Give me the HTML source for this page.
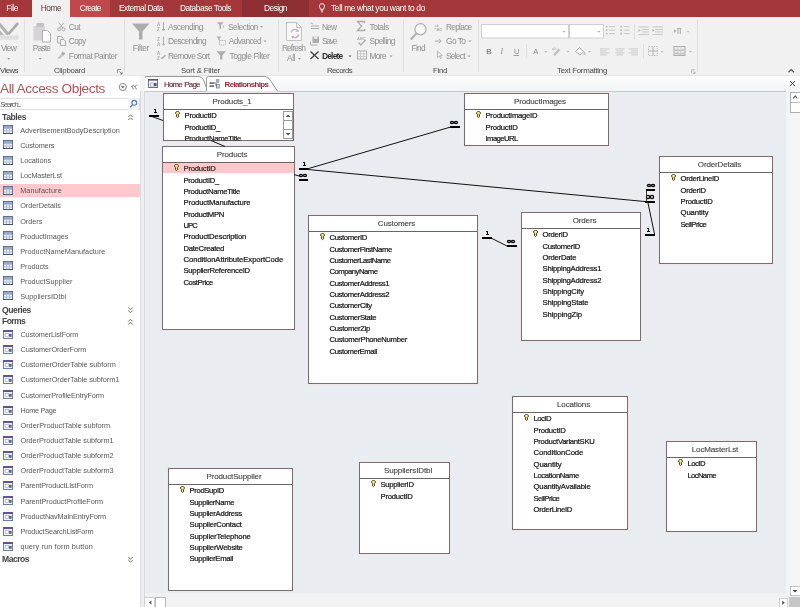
<!DOCTYPE html>
<html><head><meta charset="utf-8"><title>Access</title>
<style>
html,body{margin:0;padding:0;}
body{width:800px;height:607px;overflow:hidden;position:relative;background:#e9ecf0;font-family:"Liberation Sans", sans-serif;font-size:8px;color:#444;}
#w{position:absolute;left:0;top:0;width:800px;height:607px;will-change:transform;}
.a{position:absolute;white-space:nowrap;line-height:1;}
.tb{position:absolute;background:#fff;border:1px solid #786d71;box-sizing:border-box;box-shadow:0 0 0 1px rgba(246,228,232,.75);}
.hl{position:absolute;left:0;right:0;height:1px;background:#6e6266;}
.sep{position:absolute;width:1px;background:#dedede;top:20px;height:52px;}
svg{position:absolute;left:0;top:0;overflow:visible;}
</style></head><body><div id="w">

<div class="a" style="left:0;top:0;width:800px;height:17px;background:#a4373a"></div>
<div class="a" style="left:32px;top:0;width:38px;height:18px;background:#f1f1f1"></div>
<div class="a" style="left:70px;top:0;width:40px;height:17px;background:#c0474c"></div>
<div class="a" style="left:242px;top:0;width:67px;height:17px;background:#8c2e32"></div>
<div class="a" style="left:6.3px;top:2px;line-height:12px;height:12px;font-size:8.4px;color:#fff;letter-spacing:-0.450px;">File</div>
<div class="a" style="left:40.8px;top:2px;line-height:12px;height:12px;font-size:8.4px;color:#5c3a3c;letter-spacing:-0.486px;">Home</div>
<div class="a" style="left:79.8px;top:2px;line-height:12px;height:12px;font-size:8.4px;color:#fff;letter-spacing:-0.690px;">Create</div>
<div class="a" style="left:119.0px;top:2px;line-height:12px;height:12px;font-size:8.4px;color:#fff;letter-spacing:-0.519px;">External Data</div>
<div class="a" style="left:180.0px;top:2px;line-height:12px;height:12px;font-size:8.4px;color:#fff;letter-spacing:-0.470px;">Database Tools</div>
<div class="a" style="left:264.0px;top:2px;line-height:12px;height:12px;font-size:8.4px;color:#fff;letter-spacing:-0.513px;">Design</div>
<div class="a" style="left:331.0px;top:2px;line-height:12px;height:12px;font-size:8.4px;color:#fff;letter-spacing:-0.347px;">Tell me what you want to do</div>
<div class="a" style="left:0;top:17px;width:800px;height:58px;background:#f1f1f1"></div>
<div class="a" style="left:0;top:75px;width:800px;height:1px;background:#e6e6e6"></div>
<div class="sep" style="left:24px"></div>
<div class="sep" style="left:124px"></div>
<div class="sep" style="left:278px"></div>
<div class="sep" style="left:403px"></div>
<div class="sep" style="left:478px"></div>
<div class="sep" style="left:697px"></div>
<div class="a" style="left:0.0px;top:65px;line-height:11px;height:11px;font-size:7.8px;color:#484848;letter-spacing:-0.534px;">Views</div>
<div class="a" style="left:54.0px;top:65px;line-height:11px;height:11px;font-size:7.8px;color:#484848;letter-spacing:-0.264px;">Clipboard</div>
<div class="a" style="left:181.0px;top:65px;line-height:11px;height:11px;font-size:7.8px;color:#484848;letter-spacing:-0.167px;">Sort &amp; Filter</div>
<div class="a" style="left:327.0px;top:65px;line-height:11px;height:11px;font-size:7.8px;color:#484848;letter-spacing:-0.578px;">Records</div>
<div class="a" style="left:433.0px;top:65px;line-height:11px;height:11px;font-size:7.8px;color:#484848;letter-spacing:-0.293px;">Find</div>
<div class="a" style="left:557.0px;top:65px;line-height:11px;height:11px;font-size:7.8px;color:#484848;letter-spacing:-0.249px;">Text Formatting</div>
<div class="a" style="left:1.0px;top:42px;line-height:12px;height:12px;font-size:8.4px;color:#8e8e8e;letter-spacing:-0.754px;">View</div>
<div class="a" style="left:32.8px;top:42px;line-height:12px;height:12px;font-size:8.4px;color:#8e8e8e;letter-spacing:-0.844px;">Paste</div>
<div class="a" style="left:68.8px;top:21px;line-height:12px;height:12px;font-size:8.4px;color:#8e8e8e;letter-spacing:-0.616px;">Cut</div>
<div class="a" style="left:68.8px;top:35px;line-height:12px;height:12px;font-size:8.4px;color:#8e8e8e;letter-spacing:-0.691px;">Copy</div>
<div class="a" style="left:68.8px;top:50px;line-height:12px;height:12px;font-size:8.4px;color:#8e8e8e;letter-spacing:-0.514px;">Format Painter</div>
<div class="a" style="left:132.8px;top:42px;line-height:12px;height:12px;font-size:8.4px;color:#8e8e8e;letter-spacing:-0.438px;">Filter</div>
<div class="a" style="left:168.0px;top:21px;line-height:12px;height:12px;font-size:8.4px;color:#8e8e8e;letter-spacing:-0.458px;">Ascending</div>
<div class="a" style="left:168.0px;top:35px;line-height:12px;height:12px;font-size:8.4px;color:#8e8e8e;letter-spacing:-0.623px;">Descending</div>
<div class="a" style="left:168.0px;top:50px;line-height:12px;height:12px;font-size:8.4px;color:#8e8e8e;letter-spacing:-0.680px;">Remove Sort</div>
<div class="a" style="left:228.0px;top:21px;line-height:12px;height:12px;font-size:8.4px;color:#8e8e8e;letter-spacing:-0.495px;">Selection</div>
<div class="a" style="left:228.7px;top:35px;line-height:12px;height:12px;font-size:8.4px;color:#8e8e8e;letter-spacing:-0.594px;">Advanced</div>
<div class="a" style="left:229.4px;top:50px;line-height:12px;height:12px;font-size:8.4px;color:#8e8e8e;letter-spacing:-0.433px;">Toggle Filter</div>
<div class="a" style="left:281.9px;top:42px;line-height:12px;height:12px;font-size:8.4px;color:#8e8e8e;letter-spacing:-0.890px;">Refresh</div>
<div class="a" style="left:287.0px;top:52px;line-height:12px;height:12px;font-size:8.4px;color:#8e8e8e;letter-spacing:-0.438px;">All</div>
<div class="a" style="left:321.9px;top:21px;line-height:12px;height:12px;font-size:8.4px;color:#8e8e8e;letter-spacing:-0.822px;">New</div>
<div class="a" style="left:321.9px;top:35px;line-height:12px;height:12px;font-size:8.4px;color:#8e8e8e;letter-spacing:-1.198px;">Save</div>
<div class="a" style="left:321.9px;top:50px;line-height:12px;height:12px;font-size:8.4px;color:#2e2e2e;letter-spacing:-0.757px;font-weight:bold;">Delete</div>
<div class="a" style="left:369.5px;top:21px;line-height:12px;height:12px;font-size:8.4px;color:#8e8e8e;letter-spacing:-0.448px;">Totals</div>
<div class="a" style="left:369.5px;top:35px;line-height:12px;height:12px;font-size:8.4px;color:#8e8e8e;letter-spacing:-0.539px;">Spelling</div>
<div class="a" style="left:369.5px;top:50px;line-height:12px;height:12px;font-size:8.4px;color:#8e8e8e;letter-spacing:-0.648px;">More</div>
<div class="a" style="left:411.5px;top:42px;line-height:12px;height:12px;font-size:8.4px;color:#8e8e8e;letter-spacing:-0.699px;">Find</div>
<div class="a" style="left:446.0px;top:21px;line-height:12px;height:12px;font-size:8.4px;color:#8e8e8e;letter-spacing:-0.748px;">Replace</div>
<div class="a" style="left:446.0px;top:35px;line-height:12px;height:12px;font-size:8.4px;color:#8e8e8e;letter-spacing:-0.541px;">Go To</div>
<div class="a" style="left:446.0px;top:50px;line-height:12px;height:12px;font-size:8.4px;color:#8e8e8e;letter-spacing:-0.764px;">Select</div>
<svg width="800" height="80" viewBox="0 0 800 80"><path d="M-3 23.5L0 22.5L9.5 33.5L7 35.5Z" fill="#b2b2b2"/><path d="M-2 35.5V28L4.5 35.5Z" fill="#b8b8b8"/><path d="M17 22.3L19 24L9.3 35L7.2 33.5Z" fill="#a9a9a9"/><rect x="-1" y="35.5" width="19.5" height="4.5" fill="#e4e4e4"/><path d="M2 36v2.5M5 36v2.5M8 36v2.5M11 36v2.5M14 36v2.5M17 36v2.5" stroke="#cfcfcf" stroke-width="1"/><path d="M7.3 58h3l-1.5 1.7z" fill="#9a9a9a"/><rect x="33.5" y="26" width="11.5" height="14.5" rx="1" fill="#d6d3d6"/><rect x="36.5" y="23" width="7.5" height="4" rx="1.2" fill="#c2c0c2"/><path d="M42.5 30.5h5l3 3v8.5h-8z" fill="#fbfbfb" stroke="#b0b0b0" stroke-width="1"/><path d="M38.7 58h3l-1.5 1.7z" fill="#9a9a9a"/><g stroke="#acacac" stroke-width="1" fill="none"><path d="M58.5 22.5L63 28M64 22.5L59.5 28"/><circle cx="59" cy="29.3" r="1.5"/><circle cx="63.5" cy="29.3" r="1.5"/></g><g stroke="#acacac" stroke-width="1" fill="#f1f1f1"><path d="M57.5 36.5h4l1.5 1.5v5h-5.5z"/><path d="M60.5 39.5h3.5l1.5 1.5v4.5h-5z"/></g><path d="M62.5 51.5l3 2-2.5 2.5-2-1.5z" fill="#acacac"/><path d="M60.5 54.5l2 1.8-3 2.8-2-.8z" fill="#c4c4c4"/><path d="M117.5 69.5v3.5M117.5 69.5h3.5M119.5 71.5l2.5 2.5M122 72v2h-2" stroke="#777" stroke-width=".8" fill="none"/><path d="M132 23.5h17.5l-7 8v8l-3.5 0v-8z" fill="#acacac"/><g stroke="#acacac" stroke-width="1" fill="none"><path d="M163.5 22v8.5M162 29l1.5 1.8 1.5-1.8"/><path d="M163.5 36.5v8.5M162 43.5l1.5 1.8 1.5-1.8"/></g><g fill="#acacac" font-family="Liberation Sans" font-size="4.6" font-weight="bold"><text x="157" y="26">A</text><text x="157" y="31">Z</text><text x="157" y="40.5">Z</text><text x="157" y="45.5">A</text><text x="157" y="54.5">A</text><text x="157" y="59.5">Z</text></g><path d="M160.5 58.5l4.5-3.8 1 1-4 3.6z" fill="#acacac"/><path d="M217 22.3h6.5l-2.4 2.8v3.6h-1.7v-3.6z" fill="#acacac"/><path d="M222.5 25l2 .2-1.2 3.3z" fill="#c8c8c8"/><path d="M216.5 36.5h5l-1.8 2v1.5h-1.4v-1.5z" fill="#acacac"/><rect x="219.5" y="40.5" width="6" height="4.5" fill="none" stroke="#acacac" stroke-width=".9" stroke-dasharray="1.2 .8"/><path d="M216.5 51.3h9.5l-3.6 4v4.2h-2.3v-4.2z" fill="#acacac"/><path d="M260 26h3l-1.5 1.7z" fill="#9a9a9a"/><path d="M263.5 40.5h3l-1.5 1.7z" fill="#9a9a9a"/><path d="M286.5 22.5h10l5 5v13h-15z" fill="#f7f7f7" stroke="#c2c2c2" stroke-width="1"/><path d="M296.5 22.5v5h5" fill="none" stroke="#c2c2c2" stroke-width="1"/><path d="M291 32.5a4 4 0 0 1 7-1.5M299 34.5a4 4 0 0 1-7 1.5" fill="none" stroke="#c4b8c8" stroke-width="1.6"/><path d="M297 29l2.2 2.6-3.2.6zM293 39l-2.2-2.6 3.2-.6z" fill="#c4b8c8"/><path d="M298 58h3l-1.5 1.7z" fill="#9a9a9a"/><g stroke="#acacac" stroke-width="1"><path d="M311 26h8M311 28.5h8M313 24l-2.5-1.2"/></g><path d="M312.5 36.5h6.5v6.5h-6.5z" fill="#acacac"/><rect x="314" y="36.5" width="3.4" height="2.2" fill="#f1f1f1"/><path d="M310.5 41.5v3.5h7" fill="none" stroke="#acacac" stroke-width="1"/><path d="M310.5 51.5l8 7.5M318.5 51.5l-8 7.5" stroke="#444" stroke-width="1.3"/><path d="M348.5 55.5h3l-1.5 1.7z" fill="#555"/><path d="M364.5 23v-1.5h-7l4 4.5-4 4.5h7.2v-1.5" fill="none" stroke="#acacac" stroke-width="1.3"/><text x="357" y="39.5" font-family="Liberation Sans" font-size="4" font-weight="bold" fill="#acacac">ABC</text><path d="M358.5 42.5l2.3 2.5 4.7-5" fill="none" stroke="#acacac" stroke-width="1.4"/><rect x="357.5" y="51" width="9" height="8" fill="#f8f8f8" stroke="#acacac" stroke-width="1"/><path d="M357.5 53.8h9M357.5 56.4h9M360.5 51v8M363.5 51v8" stroke="#c2c2c2" stroke-width=".8"/><path d="M389.5 55.5h3l-1.5 1.7z" fill="#9a9a9a"/><circle cx="420.5" cy="29.3" r="5.6" fill="#f8f8f8" stroke="#acacac" stroke-width="1.2"/><path d="M416.5 33.5l-5.8 6" stroke="#acacac" stroke-width="1.8"/><text x="434.5" y="26.5" font-family="Liberation Sans" font-size="4.2" fill="#acacac">ab</text><text x="436.5" y="31" font-family="Liberation Sans" font-size="5" font-weight="bold" fill="#acacac">ac</text><path d="M434.2 28.8h2" stroke="#acacac" stroke-width=".8"/><path d="M435 41h6M438.8 38.8l2.4 2.2-2.4 2.2" fill="none" stroke="#acacac" stroke-width="1"/><path d="M437.5 51v6.5l1.8-1.6 1.2 2.6.9-.4-1.2-2.5h2.3z" fill="#f1f1f1" stroke="#acacac" stroke-width=".8"/><path d="M468.5 40.5h3l-1.5 1.7z" fill="#9a9a9a"/><path d="M467.5 55.5h3l-1.5 1.7z" fill="#9a9a9a"/><rect x="481.5" y="24.5" width="87" height="13.5" fill="#fff" stroke="#cfcfcf"/><rect x="569.5" y="24.5" width="34" height="13.5" fill="#fff" stroke="#cfcfcf"/><path d="M562.5 31h3l-1.5 1.7z" fill="#aaa"/><path d="M597.5 31h3l-1.5 1.7z" fill="#aaa"/><g font-family="Liberation Sans" font-size="7.6" fill="#8a8a8a"><text x="486.3" y="54" font-weight="bold">B</text><text x="500.5" y="54" font-style="italic" font-family="Liberation Serif">I</text><text x="514" y="54">U</text><text x="533.3" y="54">A</text></g><path d="M513.5 55.5h5.5" stroke="#8a8a8a" stroke-width=".8"/><rect x="526" y="44" width="1" height="14" fill="#e2e2e2"/><path d="M544.5 51h3l-1.5 1.7z" fill="#bbb"/><path d="M566.5 51h3l-1.5 1.7z" fill="#bbb"/><path d="M588 51h3l-1.5 1.7z" fill="#bbb"/><path d="M553 54.5l5.5-6 2 1.5-5.5 6z" fill="#c2c2c2"/><text x="552" y="49.5" font-family="Liberation Sans" font-size="4" fill="#acacac">ab</text><path d="M575.5 51.5l4-4 4 4-3.5 3.5z" fill="#f8f8f8" stroke="#acacac" stroke-width="1"/><path d="M584.5 51.5c.8 1.2 1.2 1.8 1.2 2.4a1.2 1.2 0 0 1-2.4 0c0-.6.4-1.2 1.2-2.4z" fill="#c2c2c2"/><rect x="606" y="25.9" width="1.4" height="1.4" fill="#acacac"/><rect x="609" y="26.2" width="6" height=".9" fill="#c2c2c2"/><rect x="620.5" y="25.6" width="1.2" height="2" fill="#acacac"/><rect x="623.5" y="26.2" width="6" height=".9" fill="#c2c2c2"/><rect x="606" y="29.4" width="1.4" height="1.4" fill="#acacac"/><rect x="609" y="29.7" width="6" height=".9" fill="#c2c2c2"/><rect x="620.5" y="29.1" width="1.2" height="2" fill="#acacac"/><rect x="623.5" y="29.7" width="6" height=".9" fill="#c2c2c2"/><rect x="606" y="32.9" width="1.4" height="1.4" fill="#acacac"/><rect x="609" y="33.2" width="6" height=".9" fill="#c2c2c2"/><rect x="620.5" y="32.6" width="1.2" height="2" fill="#acacac"/><rect x="623.5" y="33.2" width="6" height=".9" fill="#c2c2c2"/><rect x="634" y="24" width="1" height="15" fill="#dedede"/><rect x="638.5" y="26.5" width="10.5" height=".9" fill="#c2c2c2"/><rect x="641.5" y="29" width="7.5" height=".9" fill="#c2c2c2"/><rect x="641.5" y="31.5" width="7.5" height=".9" fill="#c2c2c2"/><rect x="638.5" y="34" width="10.5" height=".9" fill="#c2c2c2"/><path d="M638.5 29l2 1.4-2 1.4z" fill="#acacac"/><rect x="652.5" y="26.5" width="10.5" height=".9" fill="#c2c2c2"/><rect x="655.5" y="29" width="7.5" height=".9" fill="#c2c2c2"/><rect x="655.5" y="31.5" width="7.5" height=".9" fill="#c2c2c2"/><rect x="652.5" y="34" width="10.5" height=".9" fill="#c2c2c2"/><path d="M652.5 29l2 1.4-2 1.4z" fill="#acacac"/><path d="M674 29l2.4 2-2.4 2z" fill="#acacac"/><path d="M678 28.5v5.5M680.3 28.5v5.5M677 28.5h4.2" stroke="#acacac" stroke-width="1" fill="none"/><path d="M686.5 31h3l-1.5 1.7z" fill="#bbb"/><rect x="600" y="48.5" width="9.5" height=".9" fill="#c6c6c6"/><rect x="600" y="50.5" width="6.5" height=".9" fill="#c6c6c6"/><rect x="600" y="52.5" width="9.5" height=".9" fill="#c6c6c6"/><rect x="600" y="54.5" width="6.5" height=".9" fill="#c6c6c6"/><rect x="615.0" y="48.5" width="9.5" height=".9" fill="#c6c6c6"/><rect x="616.5" y="50.5" width="6.5" height=".9" fill="#c6c6c6"/><rect x="615.0" y="52.5" width="9.5" height=".9" fill="#c6c6c6"/><rect x="616.5" y="54.5" width="6.5" height=".9" fill="#c6c6c6"/><rect x="628.5" y="48.5" width="9.5" height=".9" fill="#c6c6c6"/><rect x="631.5" y="50.5" width="6.5" height=".9" fill="#c6c6c6"/><rect x="628.5" y="52.5" width="9.5" height=".9" fill="#c6c6c6"/><rect x="631.5" y="54.5" width="6.5" height=".9" fill="#c6c6c6"/><rect x="643" y="44" width="1" height="14" fill="#dedede"/><rect x="648.5" y="46.5" width="9" height="9" fill="none" stroke="#c2c2c2" stroke-width="1" stroke-dasharray="1.5 1"/><path d="M653 46.5v9M648.5 51h9" stroke="#acacac" stroke-width=".9"/><path d="M660.5 51h3l-1.5 1.7z" fill="#bbb"/><rect x="674" y="46.5" width="11" height="9" fill="#ececec" stroke="#acacac" stroke-width="1"/><rect x="674.5" y="49.5" width="10" height="1.6" fill="#c2c2c2"/><rect x="674.5" y="52.8" width="10" height="1.6" fill="#c2c2c2"/><path d="M677.5 46.5v9M681 46.5v9" stroke="#ccc" stroke-width=".7"/><path d="M689 51h3l-1.5 1.7z" fill="#bbb"/><path d="M691.5 69.8v3M691.5 69.8h3M693 71.3l2 2M695 71.6v1.8h-1.8" stroke="#aaa" stroke-width=".8" fill="none"/><path d="M788.5 72.3l2.7-2.7 2.7 2.7" fill="none" stroke="#555" stroke-width="1.3"/><path d="M319.4 6.2a2.6 2.6 0 1 1 5.2 0c0 1.3-1 1.8-1.2 3.1h-2.8c-.2-1.3-1.2-1.8-1.2-3.1z" fill="none" stroke="#fff" stroke-width=".9"/><path d="M320.8 10.6h2.4M321.1 11.9h1.8" stroke="#fff" stroke-width=".8"/></svg>
<div class="a" style="left:143px;top:76px;width:657px;height:15px;background:linear-gradient(#fdfdfd,#f3f4f5)"></div>
<div class="a" style="left:145px;top:91px;width:655px;height:1px;background:#c4c8cc"></div>
<svg width="800" height="100" viewBox="0 0 800 100"><path d="M0 76.5H144" stroke="#a2a2a2" stroke-width="1"/><path d="M140.5 77V91" stroke="#d4d4d4" stroke-width="1"/><path d="M144.5 91V78.5q0-2 2-2H199q3 0 4.5 3.5L207.5 90.5" fill="#fcfcfc" stroke="#9a9a9a" stroke-width="1"/><path d="M206.5 91.5V78.5q0-2 2-2H265q3 0 4.8 3.2L277.5 91.5Z" fill="#ffffff" stroke="none"/><path d="M206.5 91V78.5q0-2 2-2H265q3 0 4.8 3.2L277.5 91" fill="none" stroke="#9a9a9a" stroke-width="1"/><rect x="148.5" y="79.5" width="9" height="8" fill="#f4f5f9" stroke="#69738f" stroke-width="1"/><rect x="148" y="79" width="10" height="1.6" fill="#62507c"/><rect x="150.3" y="83" width="3" height="3" fill="#fff" stroke="#8c94ac" stroke-width=".6"/><rect x="154" y="83" width="2.6" height="3.2" fill="#4e5a84"/><rect x="209.5" y="82.5" width="4.5" height="1.1" fill="#222"/><rect x="209.5" y="85.5" width="4.5" height="1.1" fill="#222"/><path d="M214 83h2v3.2h1.5" fill="none" stroke="#5a6680" stroke-width=".8"/><rect x="216.2" y="79.6" width="2.8" height="3" fill="#a8b6d0" stroke="#7a88a6" stroke-width=".5"/><rect x="216.6" y="84.6" width="2.6" height="3.4" fill="#dde3ee" stroke="#5a6680" stroke-width=".7"/><path d="M790 81l5 5M795 81l-5 5" stroke="#333" stroke-width=".95"/></svg>
<div class="a" style="left:164.0px;top:79px;line-height:11px;height:11px;font-size:7.9px;color:#6a2c3c;letter-spacing:-0.786px;-webkit-text-stroke:.15px #6a2c3c;word-spacing:1px;">Home Page</div>
<div class="a" style="left:224.6px;top:79px;line-height:11px;height:11px;font-size:7.9px;color:#8c2a3c;letter-spacing:-0.619px;font-weight:bold;">Relationships</div>
<div class="a" style="left:0;top:76px;width:140px;height:531px;background:#fff"></div>
<div class="a" style="left:140px;top:91px;width:5px;height:516px;background:#efeff2;border-left:1px solid #dadadc;border-right:1px solid #d8dade;box-sizing:border-box"></div>
<div class="a" style="left:140px;top:76px;width:5px;height:15px;background:#f4f4f4"></div>
<div class="a" style="left:0.0px;top:80px;line-height:17px;height:17px;font-size:13.6px;color:#ad5358;letter-spacing:-0.378px;">All Access Objects</div>
<div class="a" style="left:-1px;top:98px;width:141px;height:12px;border:1px solid #e0e0e0;box-sizing:border-box;background:#fff"></div>
<div class="a" style="left:0.0px;top:99px;line-height:11px;height:11px;font-size:7.4px;color:#555;letter-spacing:-0.953px;font-style:italic;">Search...</div>
<div class="a" style="left:2.0px;top:111px;line-height:12px;height:12px;font-size:8.6px;color:#444;letter-spacing:-0.432px;font-weight:bold;">Tables</div>
<div class="a" style="left:20.2px;top:125px;line-height:11px;height:11px;font-size:7.3px;color:#585858;letter-spacing:-0.006px;">AdvertisementBodyDescription</div>
<div class="a" style="left:20.2px;top:140px;line-height:11px;height:11px;font-size:7.3px;color:#585858;letter-spacing:-0.120px;">Customers</div>
<div class="a" style="left:20.2px;top:155px;line-height:11px;height:11px;font-size:7.3px;color:#585858;letter-spacing:-0.039px;">Locations</div>
<div class="a" style="left:20.2px;top:170px;line-height:11px;height:11px;font-size:7.3px;color:#585858;letter-spacing:-0.184px;">LocMasterLst</div>
<div class="a" style="left:0;top:184.1px;width:140px;height:13px;background:#ffc9cd"></div>
<div class="a" style="left:20.2px;top:185px;line-height:11px;height:11px;font-size:7.3px;color:#585858;letter-spacing:0.094px;">Manufacture</div>
<div class="a" style="left:20.2px;top:200px;line-height:11px;height:11px;font-size:7.3px;color:#585858;letter-spacing:-0.022px;">OrderDetails</div>
<div class="a" style="left:20.2px;top:216px;line-height:11px;height:11px;font-size:7.3px;color:#585858;letter-spacing:-0.019px;">Orders</div>
<div class="a" style="left:20.2px;top:231px;line-height:11px;height:11px;font-size:7.3px;color:#585858;letter-spacing:-0.075px;">ProductImages</div>
<div class="a" style="left:20.2px;top:246px;line-height:11px;height:11px;font-size:7.3px;color:#585858;letter-spacing:0.001px;">ProductNameManufacture</div>
<div class="a" style="left:20.2px;top:261px;line-height:11px;height:11px;font-size:7.3px;color:#585858;letter-spacing:-0.050px;">Products</div>
<div class="a" style="left:20.2px;top:276px;line-height:11px;height:11px;font-size:7.3px;color:#585858;letter-spacing:0.025px;">ProductSupplier</div>
<div class="a" style="left:20.2px;top:291px;line-height:11px;height:11px;font-size:7.3px;color:#585858;letter-spacing:0.047px;">SuppliersIDtbl</div>
<div class="a" style="left:2.0px;top:304px;line-height:12px;height:12px;font-size:8.6px;color:#444;letter-spacing:-0.445px;font-weight:bold;">Queries</div>
<div class="a" style="left:2.0px;top:315px;line-height:12px;height:12px;font-size:8.6px;color:#444;letter-spacing:-0.613px;font-weight:bold;">Forms</div>
<div class="a" style="left:20.5px;top:329px;line-height:11px;height:11px;font-size:7.3px;color:#585858;letter-spacing:-0.145px;">CustomerListForm</div>
<div class="a" style="left:20.5px;top:344px;line-height:11px;height:11px;font-size:7.3px;color:#585858;letter-spacing:-0.089px;">CustomerOrderForm</div>
<div class="a" style="left:20.5px;top:359px;line-height:11px;height:11px;font-size:7.3px;color:#585858;letter-spacing:-0.036px;">CustomerOrderTable subform</div>
<div class="a" style="left:20.5px;top:374px;line-height:11px;height:11px;font-size:7.3px;color:#585858;letter-spacing:-0.055px;">CustomerOrderTable subform1</div>
<div class="a" style="left:20.5px;top:390px;line-height:11px;height:11px;font-size:7.3px;color:#585858;letter-spacing:-0.120px;">CustomerProfileEntryForm</div>
<div class="a" style="left:20.5px;top:405px;line-height:11px;height:11px;font-size:7.3px;color:#585858;letter-spacing:-0.294px;">Home Page</div>
<div class="a" style="left:20.5px;top:420px;line-height:11px;height:11px;font-size:7.3px;color:#585858;letter-spacing:-0.002px;">OrderProductTable subform</div>
<div class="a" style="left:20.5px;top:435px;line-height:11px;height:11px;font-size:7.3px;color:#585858;letter-spacing:-0.023px;">OrderProductTable subform1</div>
<div class="a" style="left:20.5px;top:450px;line-height:11px;height:11px;font-size:7.3px;color:#585858;letter-spacing:-0.023px;">OrderProductTable subform2</div>
<div class="a" style="left:20.5px;top:465px;line-height:11px;height:11px;font-size:7.3px;color:#585858;letter-spacing:-0.023px;">OrderProductTable subform3</div>
<div class="a" style="left:20.5px;top:480px;line-height:11px;height:11px;font-size:7.3px;color:#585858;letter-spacing:-0.125px;">ParentProductListForm</div>
<div class="a" style="left:20.5px;top:496px;line-height:11px;height:11px;font-size:7.3px;color:#585858;letter-spacing:-0.077px;">ParentProductProfileForm</div>
<div class="a" style="left:20.5px;top:511px;line-height:11px;height:11px;font-size:7.3px;color:#585858;letter-spacing:-0.109px;">ProductNavMainEntryForm</div>
<div class="a" style="left:20.5px;top:526px;line-height:11px;height:11px;font-size:7.3px;color:#585858;letter-spacing:-0.179px;">ProductSearchListForm</div>
<div class="a" style="left:20.5px;top:541px;line-height:11px;height:11px;font-size:7.3px;color:#585858;letter-spacing:0.125px;">query run form button</div>
<div class="a" style="left:2.0px;top:553px;line-height:12px;height:12px;font-size:8.6px;color:#444;letter-spacing:-0.516px;font-weight:bold;">Macros</div>
<svg width="145" height="607" viewBox="0 0 145 607"><rect x="3.5" y="125.5" width="9" height="8" fill="#f0f4fb" stroke="#62718f" stroke-width="1"/><rect x="4" y="126" width="8" height="2" fill="#97a7c9"/><path d="M6.5 126v7M9.5 126v7M4 128.5h8M4 131h8" stroke="#9fb0d0" stroke-width=".8"/><rect x="3" y="133" width="10" height="1" fill="#46526e"/><rect x="3.5" y="140.5" width="9" height="8" fill="#f0f4fb" stroke="#62718f" stroke-width="1"/><rect x="4" y="141" width="8" height="2" fill="#97a7c9"/><path d="M6.5 141v7M9.5 141v7M4 143.5h8M4 146h8" stroke="#9fb0d0" stroke-width=".8"/><rect x="3" y="148" width="10" height="1" fill="#46526e"/><rect x="3.5" y="156.5" width="9" height="8" fill="#f0f4fb" stroke="#62718f" stroke-width="1"/><rect x="4" y="157" width="8" height="2" fill="#97a7c9"/><path d="M6.5 157v7M9.5 157v7M4 159.5h8M4 162h8" stroke="#9fb0d0" stroke-width=".8"/><rect x="3" y="164" width="10" height="1" fill="#46526e"/><rect x="3.5" y="171.5" width="9" height="8" fill="#f0f4fb" stroke="#62718f" stroke-width="1"/><rect x="4" y="172" width="8" height="2" fill="#97a7c9"/><path d="M6.5 172v7M9.5 172v7M4 174.5h8M4 177h8" stroke="#9fb0d0" stroke-width=".8"/><rect x="3" y="179" width="10" height="1" fill="#46526e"/><rect x="3.5" y="186.5" width="9" height="8" fill="#f0f4fb" stroke="#62718f" stroke-width="1"/><rect x="4" y="187" width="8" height="2" fill="#97a7c9"/><path d="M6.5 187v7M9.5 187v7M4 189.5h8M4 192h8" stroke="#9fb0d0" stroke-width=".8"/><rect x="3" y="194" width="10" height="1" fill="#46526e"/><rect x="3.5" y="201.5" width="9" height="8" fill="#f0f4fb" stroke="#62718f" stroke-width="1"/><rect x="4" y="202" width="8" height="2" fill="#97a7c9"/><path d="M6.5 202v7M9.5 202v7M4 204.5h8M4 207h8" stroke="#9fb0d0" stroke-width=".8"/><rect x="3" y="209" width="10" height="1" fill="#46526e"/><rect x="3.5" y="216.5" width="9" height="8" fill="#f0f4fb" stroke="#62718f" stroke-width="1"/><rect x="4" y="217" width="8" height="2" fill="#97a7c9"/><path d="M6.5 217v7M9.5 217v7M4 219.5h8M4 222h8" stroke="#9fb0d0" stroke-width=".8"/><rect x="3" y="224" width="10" height="1" fill="#46526e"/><rect x="3.5" y="231.5" width="9" height="8" fill="#f0f4fb" stroke="#62718f" stroke-width="1"/><rect x="4" y="232" width="8" height="2" fill="#97a7c9"/><path d="M6.5 232v7M9.5 232v7M4 234.5h8M4 237h8" stroke="#9fb0d0" stroke-width=".8"/><rect x="3" y="239" width="10" height="1" fill="#46526e"/><rect x="3.5" y="246.5" width="9" height="8" fill="#f0f4fb" stroke="#62718f" stroke-width="1"/><rect x="4" y="247" width="8" height="2" fill="#97a7c9"/><path d="M6.5 247v7M9.5 247v7M4 249.5h8M4 252h8" stroke="#9fb0d0" stroke-width=".8"/><rect x="3" y="254" width="10" height="1" fill="#46526e"/><rect x="3.5" y="261.5" width="9" height="8" fill="#f0f4fb" stroke="#62718f" stroke-width="1"/><rect x="4" y="262" width="8" height="2" fill="#97a7c9"/><path d="M6.5 262v7M9.5 262v7M4 264.5h8M4 267h8" stroke="#9fb0d0" stroke-width=".8"/><rect x="3" y="269" width="10" height="1" fill="#46526e"/><rect x="3.5" y="276.5" width="9" height="8" fill="#f0f4fb" stroke="#62718f" stroke-width="1"/><rect x="4" y="277" width="8" height="2" fill="#97a7c9"/><path d="M6.5 277v7M9.5 277v7M4 279.5h8M4 282h8" stroke="#9fb0d0" stroke-width=".8"/><rect x="3" y="284" width="10" height="1" fill="#46526e"/><rect x="3.5" y="291.5" width="9" height="8" fill="#f0f4fb" stroke="#62718f" stroke-width="1"/><rect x="4" y="292" width="8" height="2" fill="#97a7c9"/><path d="M6.5 292v7M9.5 292v7M4 294.5h8M4 297h8" stroke="#9fb0d0" stroke-width=".8"/><rect x="3" y="299" width="10" height="1" fill="#46526e"/><rect x="3.5" y="330.5" width="9" height="8" fill="#eef2f9" stroke="#6f7c9c" stroke-width="1"/><rect x="3" y="330" width="10" height="2" fill="#64528a"/><rect x="5.4" y="333.6" width="3" height="3" fill="#fff" stroke="#9aa6c0" stroke-width=".6"/><rect x="9" y="333.8" width="2.6" height="3" fill="#5a6490"/><rect x="3.5" y="345.5" width="9" height="8" fill="#eef2f9" stroke="#6f7c9c" stroke-width="1"/><rect x="3" y="345" width="10" height="2" fill="#64528a"/><rect x="5.4" y="348.6" width="3" height="3" fill="#fff" stroke="#9aa6c0" stroke-width=".6"/><rect x="9" y="348.8" width="2.6" height="3" fill="#5a6490"/><rect x="3.5" y="360.5" width="9" height="8" fill="#eef2f9" stroke="#6f7c9c" stroke-width="1"/><rect x="3" y="360" width="10" height="2" fill="#64528a"/><rect x="5.4" y="363.6" width="3" height="3" fill="#fff" stroke="#9aa6c0" stroke-width=".6"/><rect x="9" y="363.8" width="2.6" height="3" fill="#5a6490"/><rect x="3.5" y="375.5" width="9" height="8" fill="#eef2f9" stroke="#6f7c9c" stroke-width="1"/><rect x="3" y="375" width="10" height="2" fill="#64528a"/><rect x="5.4" y="378.6" width="3" height="3" fill="#fff" stroke="#9aa6c0" stroke-width=".6"/><rect x="9" y="378.8" width="2.6" height="3" fill="#5a6490"/><rect x="3.5" y="390.5" width="9" height="8" fill="#eef2f9" stroke="#6f7c9c" stroke-width="1"/><rect x="3" y="390" width="10" height="2" fill="#64528a"/><rect x="5.4" y="393.6" width="3" height="3" fill="#fff" stroke="#9aa6c0" stroke-width=".6"/><rect x="9" y="393.8" width="2.6" height="3" fill="#5a6490"/><rect x="3.5" y="406.5" width="9" height="8" fill="#eef2f9" stroke="#6f7c9c" stroke-width="1"/><rect x="3" y="406" width="10" height="2" fill="#64528a"/><rect x="5.4" y="409.6" width="3" height="3" fill="#fff" stroke="#9aa6c0" stroke-width=".6"/><rect x="9" y="409.8" width="2.6" height="3" fill="#5a6490"/><rect x="3.5" y="421.5" width="9" height="8" fill="#eef2f9" stroke="#6f7c9c" stroke-width="1"/><rect x="3" y="421" width="10" height="2" fill="#64528a"/><rect x="5.4" y="424.6" width="3" height="3" fill="#fff" stroke="#9aa6c0" stroke-width=".6"/><rect x="9" y="424.8" width="2.6" height="3" fill="#5a6490"/><rect x="3.5" y="436.5" width="9" height="8" fill="#eef2f9" stroke="#6f7c9c" stroke-width="1"/><rect x="3" y="436" width="10" height="2" fill="#64528a"/><rect x="5.4" y="439.6" width="3" height="3" fill="#fff" stroke="#9aa6c0" stroke-width=".6"/><rect x="9" y="439.8" width="2.6" height="3" fill="#5a6490"/><rect x="3.5" y="451.5" width="9" height="8" fill="#eef2f9" stroke="#6f7c9c" stroke-width="1"/><rect x="3" y="451" width="10" height="2" fill="#64528a"/><rect x="5.4" y="454.6" width="3" height="3" fill="#fff" stroke="#9aa6c0" stroke-width=".6"/><rect x="9" y="454.8" width="2.6" height="3" fill="#5a6490"/><rect x="3.5" y="466.5" width="9" height="8" fill="#eef2f9" stroke="#6f7c9c" stroke-width="1"/><rect x="3" y="466" width="10" height="2" fill="#64528a"/><rect x="5.4" y="469.6" width="3" height="3" fill="#fff" stroke="#9aa6c0" stroke-width=".6"/><rect x="9" y="469.8" width="2.6" height="3" fill="#5a6490"/><rect x="3.5" y="481.5" width="9" height="8" fill="#eef2f9" stroke="#6f7c9c" stroke-width="1"/><rect x="3" y="481" width="10" height="2" fill="#64528a"/><rect x="5.4" y="484.6" width="3" height="3" fill="#fff" stroke="#9aa6c0" stroke-width=".6"/><rect x="9" y="484.8" width="2.6" height="3" fill="#5a6490"/><rect x="3.5" y="496.5" width="9" height="8" fill="#eef2f9" stroke="#6f7c9c" stroke-width="1"/><rect x="3" y="496" width="10" height="2" fill="#64528a"/><rect x="5.4" y="499.6" width="3" height="3" fill="#fff" stroke="#9aa6c0" stroke-width=".6"/><rect x="9" y="499.8" width="2.6" height="3" fill="#5a6490"/><rect x="3.5" y="512.5" width="9" height="8" fill="#eef2f9" stroke="#6f7c9c" stroke-width="1"/><rect x="3" y="512" width="10" height="2" fill="#64528a"/><rect x="5.4" y="515.6" width="3" height="3" fill="#fff" stroke="#9aa6c0" stroke-width=".6"/><rect x="9" y="515.8" width="2.6" height="3" fill="#5a6490"/><rect x="3.5" y="527.5" width="9" height="8" fill="#eef2f9" stroke="#6f7c9c" stroke-width="1"/><rect x="3" y="527" width="10" height="2" fill="#64528a"/><rect x="5.4" y="530.6" width="3" height="3" fill="#fff" stroke="#9aa6c0" stroke-width=".6"/><rect x="9" y="530.8" width="2.6" height="3" fill="#5a6490"/><rect x="3.5" y="542.5" width="9" height="8" fill="#eef2f9" stroke="#6f7c9c" stroke-width="1"/><rect x="3" y="542" width="10" height="2" fill="#64528a"/><rect x="5.4" y="545.6" width="3" height="3" fill="#fff" stroke="#9aa6c0" stroke-width=".6"/><rect x="9" y="545.8" width="2.6" height="3" fill="#5a6490"/><circle cx="122.8" cy="87" r="3.6" fill="#f4f4f4" stroke="#8a8a8a" stroke-width="1"/><path d="M121 86.2h3.6l-1.8 2.1z" fill="#555"/><path d="M133.8 84.8l-2.2 2.2 2.2 2.2M136.8 84.8l-2.2 2.2 2.2 2.2" fill="none" stroke="#555" stroke-width=".9"/><rect x="128" y="98.5" width="11" height="11" fill="#f4f6fa"/><circle cx="134.3" cy="102.8" r="2.4" fill="none" stroke="#5a7ab0" stroke-width="1.1"/><path d="M132.6 104.6l-2.6 2.8" stroke="#5a7ab0" stroke-width="1.3"/><path d="M128.3 117.0l2.2-2.2 2.2 2.2M128.3 120.0l2.2-2.2 2.2 2.2" fill="none" stroke="#555" stroke-width=".9"/><path d="M128.3 307.5l2.2 2.2 2.2-2.2M128.3 310.5l2.2 2.2 2.2-2.2" fill="none" stroke="#555" stroke-width=".9"/><path d="M128.3 321.5l2.2-2.2 2.2 2.2M128.3 324.5l2.2-2.2 2.2 2.2" fill="none" stroke="#555" stroke-width=".9"/><path d="M128.3 557l2.2 2.2 2.2-2.2M128.3 560l2.2 2.2 2.2-2.2" fill="none" stroke="#555" stroke-width=".9"/></svg>
<div class="a" style="left:786px;top:91px;width:3px;height:516px;background:#f1f3f5"></div>
<div class="a" style="left:789px;top:91px;width:11px;height:516px;background:#f5f5f5"></div>
<div class="a" style="left:145px;top:593px;width:655px;height:4px;background:#eff1f3"></div>
<div class="a" style="left:145px;top:597px;width:655px;height:10px;background:#f3f3f3"></div>
<div class="a" style="left:789px;top:597px;width:11px;height:10px;background:#c6c6c6"></div>
<svg width="800" height="607" viewBox="0 0 800 607"><rect x="790.5" y="92.5" width="10" height="20" fill="#fff" stroke="#b0b0b0"/><path d="M790.5 102.5h10" stroke="#c0c0c0"/><path d="M793 98.3l2.2-2.2 2.2 2.2" fill="none" stroke="#555" stroke-width="1.1"/><rect x="790.5" y="586.5" width="10" height="9" fill="#fff" stroke="#c4c4c4"/><path d="M792.8 590h4.6l-2.3 2.6z" fill="#444"/><rect x="144.5" y="597.5" width="10" height="10" fill="#fff" stroke="#cfcfcf"/><path d="M151.4 600.4l-2.4 2.2 2.4 2.2z" fill="#555"/><rect x="155.5" y="597.5" width="10" height="10" fill="#fff" stroke="#b8b8b8"/><rect x="779.5" y="598.5" width="8" height="9" fill="#fff" stroke="#d0d0d0"/><path d="M782.2 600.6l2.6 2.2-2.6 2.2z" fill="#555"/></svg>
<div class="tb" style="left:162px;top:146px;width:133px;height:184px"><div class="hl" style="top:15px"></div><div class="a" style="left:0;top:16px;width:131px;height:10px;background:#fdc8c9"></div></div>
<div class="a" style="left:183.5px;top:163px;line-height:11px;height:11px;font-size:7.7px;color:#3a2a2a;letter-spacing:-0.243px;-webkit-text-stroke:.22px #222;">ProductID</div>
<div class="a" style="left:183.5px;top:175px;line-height:11px;height:11px;font-size:7.7px;color:#0c0c0c;letter-spacing:-0.297px;-webkit-text-stroke:.22px #222;">ProductID_</div>
<div class="a" style="left:183.5px;top:186px;line-height:11px;height:11px;font-size:7.7px;color:#0c0c0c;letter-spacing:-0.297px;-webkit-text-stroke:.22px #222;">ProductNameTitle</div>
<div class="a" style="left:183.5px;top:197px;line-height:11px;height:11px;font-size:7.7px;color:#0c0c0c;letter-spacing:-0.135px;-webkit-text-stroke:.22px #222;">ProductManufacture</div>
<div class="a" style="left:183.5px;top:209px;line-height:11px;height:11px;font-size:7.7px;color:#0c0c0c;letter-spacing:-0.308px;-webkit-text-stroke:.22px #222;">ProductMPN</div>
<div class="a" style="left:183.5px;top:220px;line-height:11px;height:11px;font-size:7.7px;color:#0c0c0c;letter-spacing:-0.945px;-webkit-text-stroke:.22px #222;">UPC</div>
<div class="a" style="left:183.5px;top:231px;line-height:11px;height:11px;font-size:7.7px;color:#0c0c0c;letter-spacing:-0.125px;-webkit-text-stroke:.22px #222;">ProductDescription</div>
<div class="a" style="left:183.5px;top:243px;line-height:11px;height:11px;font-size:7.7px;color:#0c0c0c;letter-spacing:-0.281px;-webkit-text-stroke:.22px #222;">DateCreated</div>
<div class="a" style="left:183.5px;top:254px;line-height:11px;height:11px;font-size:7.7px;color:#0c0c0c;letter-spacing:-0.072px;-webkit-text-stroke:.22px #222;">ConditionAttributeExportCode</div>
<div class="a" style="left:183.5px;top:265px;line-height:11px;height:11px;font-size:7.7px;color:#0c0c0c;letter-spacing:-0.267px;-webkit-text-stroke:.22px #222;">SupplierReferenceID</div>
<div class="a" style="left:183.5px;top:277px;line-height:11px;height:11px;font-size:7.7px;color:#0c0c0c;letter-spacing:-0.436px;-webkit-text-stroke:.22px #222;">CostPrice</div>
<svg width="5" height="7" viewBox="0 0 5 7" style="left:174px;top:164px"><path d="M2.5 0.5C4 0.5 4.5 1.2 4.5 2C4.5 2.8 3.9 3.2 3.5 3.5L3.5 5.8L2.5 6.6L1.5 5.8L1.5 3.5C1.1 3.2 0.5 2.8 0.5 2C0.5 1.2 1 0.5 2.5 0.5Z" fill="#ecd98a" stroke="#54461a" stroke-width="1"/><rect x="2" y="1.3" width="1" height="1" fill="#fff6c8"/></svg>
<div class="tb" style="left:163px;top:93px;width:131px;height:48px"><div class="hl" style="top:15px"></div></div>
<div class="a" style="left:184.5px;top:110px;line-height:11px;height:11px;font-size:7.7px;color:#0c0c0c;letter-spacing:-0.243px;-webkit-text-stroke:.22px #222;">ProductID</div>
<div class="a" style="left:184.5px;top:122px;line-height:11px;height:11px;font-size:7.7px;color:#0c0c0c;letter-spacing:-0.297px;-webkit-text-stroke:.22px #222;">ProductID_</div>
<div class="a" style="left:184.5px;top:133px;line-height:11px;height:11px;font-size:7.7px;color:#111;letter-spacing:-0.297px;-webkit-text-stroke:.22px #222;clip-path:inset(0 0 3.4px 0);">ProductNameTitle</div>
<svg width="5" height="7" viewBox="0 0 5 7" style="left:175px;top:111px"><path d="M2.5 0.5C4 0.5 4.5 1.2 4.5 2C4.5 2.8 3.9 3.2 3.5 3.5L3.5 5.8L2.5 6.6L1.5 5.8L1.5 3.5C1.1 3.2 0.5 2.8 0.5 2C0.5 1.2 1 0.5 2.5 0.5Z" fill="#ecd98a" stroke="#54461a" stroke-width="1"/><rect x="2" y="1.3" width="1" height="1" fill="#fff6c8"/></svg>
<div class="tb" style="left:464px;top:93px;width:145px;height:53px"><div class="hl" style="top:15px"></div></div>
<div class="a" style="left:485.5px;top:110px;line-height:11px;height:11px;font-size:7.7px;color:#0c0c0c;letter-spacing:-0.275px;-webkit-text-stroke:.22px #222;">ProductImageID</div>
<div class="a" style="left:485.5px;top:122px;line-height:11px;height:11px;font-size:7.7px;color:#0c0c0c;letter-spacing:-0.243px;-webkit-text-stroke:.22px #222;">ProductID</div>
<div class="a" style="left:485.5px;top:133px;line-height:11px;height:11px;font-size:7.7px;color:#0c0c0c;letter-spacing:-0.569px;-webkit-text-stroke:.22px #222;">ImageURL</div>
<svg width="5" height="7" viewBox="0 0 5 7" style="left:476px;top:111px"><path d="M2.5 0.5C4 0.5 4.5 1.2 4.5 2C4.5 2.8 3.9 3.2 3.5 3.5L3.5 5.8L2.5 6.6L1.5 5.8L1.5 3.5C1.1 3.2 0.5 2.8 0.5 2C0.5 1.2 1 0.5 2.5 0.5Z" fill="#ecd98a" stroke="#54461a" stroke-width="1"/><rect x="2" y="1.3" width="1" height="1" fill="#fff6c8"/></svg>
<div class="tb" style="left:659px;top:156px;width:114px;height:108px"><div class="hl" style="top:15px"></div></div>
<div class="a" style="left:680.5px;top:173px;line-height:11px;height:11px;font-size:7.7px;color:#0c0c0c;letter-spacing:-0.298px;-webkit-text-stroke:.22px #222;">OrderLineID</div>
<div class="a" style="left:680.5px;top:185px;line-height:11px;height:11px;font-size:7.7px;color:#0c0c0c;letter-spacing:-0.292px;-webkit-text-stroke:.22px #222;">OrderID</div>
<div class="a" style="left:680.5px;top:196px;line-height:11px;height:11px;font-size:7.7px;color:#0c0c0c;letter-spacing:-0.243px;-webkit-text-stroke:.22px #222;">ProductID</div>
<div class="a" style="left:680.5px;top:207px;line-height:11px;height:11px;font-size:7.7px;color:#0c0c0c;letter-spacing:-0.068px;-webkit-text-stroke:.22px #222;">Quantity</div>
<div class="a" style="left:680.5px;top:219px;line-height:11px;height:11px;font-size:7.7px;color:#0c0c0c;letter-spacing:-0.505px;-webkit-text-stroke:.22px #222;">SellPrice</div>
<svg width="5" height="7" viewBox="0 0 5 7" style="left:671px;top:174px"><path d="M2.5 0.5C4 0.5 4.5 1.2 4.5 2C4.5 2.8 3.9 3.2 3.5 3.5L3.5 5.8L2.5 6.6L1.5 5.8L1.5 3.5C1.1 3.2 0.5 2.8 0.5 2C0.5 1.2 1 0.5 2.5 0.5Z" fill="#ecd98a" stroke="#54461a" stroke-width="1"/><rect x="2" y="1.3" width="1" height="1" fill="#fff6c8"/></svg>
<div class="tb" style="left:308px;top:215px;width:170px;height:169px"><div class="hl" style="top:15px"></div></div>
<div class="a" style="left:329.5px;top:232px;line-height:11px;height:11px;font-size:7.7px;color:#0c0c0c;letter-spacing:-0.362px;-webkit-text-stroke:.22px #222;">CustomerID</div>
<div class="a" style="left:329.5px;top:244px;line-height:11px;height:11px;font-size:7.7px;color:#0c0c0c;letter-spacing:-0.381px;-webkit-text-stroke:.22px #222;">CustomerFirstName</div>
<div class="a" style="left:329.5px;top:255px;line-height:11px;height:11px;font-size:7.7px;color:#0c0c0c;letter-spacing:-0.460px;-webkit-text-stroke:.22px #222;">CustomerLastName</div>
<div class="a" style="left:329.5px;top:266px;line-height:11px;height:11px;font-size:7.7px;color:#0c0c0c;letter-spacing:-0.493px;-webkit-text-stroke:.22px #222;">CompanyName</div>
<div class="a" style="left:329.5px;top:278px;line-height:11px;height:11px;font-size:7.7px;color:#0c0c0c;letter-spacing:-0.388px;-webkit-text-stroke:.22px #222;">CustomerAddress1</div>
<div class="a" style="left:329.5px;top:289px;line-height:11px;height:11px;font-size:7.7px;color:#0c0c0c;letter-spacing:-0.388px;-webkit-text-stroke:.22px #222;">CustomerAddress2</div>
<div class="a" style="left:329.5px;top:300px;line-height:11px;height:11px;font-size:7.7px;color:#0c0c0c;letter-spacing:-0.355px;-webkit-text-stroke:.22px #222;">CustomerCity</div>
<div class="a" style="left:329.5px;top:312px;line-height:11px;height:11px;font-size:7.7px;color:#0c0c0c;letter-spacing:-0.352px;-webkit-text-stroke:.22px #222;">CustomerState</div>
<div class="a" style="left:329.5px;top:323px;line-height:11px;height:11px;font-size:7.7px;color:#0c0c0c;letter-spacing:-0.320px;-webkit-text-stroke:.22px #222;">CustomerZip</div>
<div class="a" style="left:329.5px;top:334px;line-height:11px;height:11px;font-size:7.7px;color:#0c0c0c;letter-spacing:-0.285px;-webkit-text-stroke:.22px #222;">CustomerPhoneNumber</div>
<div class="a" style="left:329.5px;top:346px;line-height:11px;height:11px;font-size:7.7px;color:#0c0c0c;letter-spacing:-0.404px;-webkit-text-stroke:.22px #222;">CustomerEmail</div>
<svg width="5" height="7" viewBox="0 0 5 7" style="left:320px;top:233px"><path d="M2.5 0.5C4 0.5 4.5 1.2 4.5 2C4.5 2.8 3.9 3.2 3.5 3.5L3.5 5.8L2.5 6.6L1.5 5.8L1.5 3.5C1.1 3.2 0.5 2.8 0.5 2C0.5 1.2 1 0.5 2.5 0.5Z" fill="#ecd98a" stroke="#54461a" stroke-width="1"/><rect x="2" y="1.3" width="1" height="1" fill="#fff6c8"/></svg>
<div class="tb" style="left:521px;top:212px;width:120px;height:129px"><div class="hl" style="top:15px"></div></div>
<div class="a" style="left:542.5px;top:229px;line-height:11px;height:11px;font-size:7.7px;color:#0c0c0c;letter-spacing:-0.292px;-webkit-text-stroke:.22px #222;">OrderID</div>
<div class="a" style="left:542.5px;top:241px;line-height:11px;height:11px;font-size:7.7px;color:#0c0c0c;letter-spacing:-0.362px;-webkit-text-stroke:.22px #222;">CustomerID</div>
<div class="a" style="left:542.5px;top:252px;line-height:11px;height:11px;font-size:7.7px;color:#0c0c0c;letter-spacing:-0.243px;-webkit-text-stroke:.22px #222;">OrderDate</div>
<div class="a" style="left:542.5px;top:263px;line-height:11px;height:11px;font-size:7.7px;color:#0c0c0c;letter-spacing:-0.232px;-webkit-text-stroke:.22px #222;">ShippingAddress1</div>
<div class="a" style="left:542.5px;top:275px;line-height:11px;height:11px;font-size:7.7px;color:#0c0c0c;letter-spacing:-0.232px;-webkit-text-stroke:.22px #222;">ShippingAddress2</div>
<div class="a" style="left:542.5px;top:286px;line-height:11px;height:11px;font-size:7.7px;color:#0c0c0c;letter-spacing:-0.131px;-webkit-text-stroke:.22px #222;">ShippingCity</div>
<div class="a" style="left:542.5px;top:297px;line-height:11px;height:11px;font-size:7.7px;color:#0c0c0c;letter-spacing:-0.152px;-webkit-text-stroke:.22px #222;">ShippingState</div>
<div class="a" style="left:542.5px;top:309px;line-height:11px;height:11px;font-size:7.7px;color:#0c0c0c;letter-spacing:-0.101px;-webkit-text-stroke:.22px #222;">ShippingZip</div>
<svg width="5" height="7" viewBox="0 0 5 7" style="left:533px;top:230px"><path d="M2.5 0.5C4 0.5 4.5 1.2 4.5 2C4.5 2.8 3.9 3.2 3.5 3.5L3.5 5.8L2.5 6.6L1.5 5.8L1.5 3.5C1.1 3.2 0.5 2.8 0.5 2C0.5 1.2 1 0.5 2.5 0.5Z" fill="#ecd98a" stroke="#54461a" stroke-width="1"/><rect x="2" y="1.3" width="1" height="1" fill="#fff6c8"/></svg>
<div class="tb" style="left:512px;top:396px;width:116px;height:134px"><div class="hl" style="top:15px"></div></div>
<div class="a" style="left:533.5px;top:413px;line-height:11px;height:11px;font-size:7.7px;color:#0c0c0c;letter-spacing:-0.519px;-webkit-text-stroke:.22px #222;">LocID</div>
<div class="a" style="left:533.5px;top:425px;line-height:11px;height:11px;font-size:7.7px;color:#0c0c0c;letter-spacing:-0.243px;-webkit-text-stroke:.22px #222;">ProductID</div>
<div class="a" style="left:533.5px;top:436px;line-height:11px;height:11px;font-size:7.7px;color:#0c0c0c;letter-spacing:-0.300px;-webkit-text-stroke:.22px #222;">ProductVariantSKU</div>
<div class="a" style="left:533.5px;top:447px;line-height:11px;height:11px;font-size:7.7px;color:#0c0c0c;letter-spacing:-0.089px;-webkit-text-stroke:.22px #222;">ConditionCode</div>
<div class="a" style="left:533.5px;top:459px;line-height:11px;height:11px;font-size:7.7px;color:#0c0c0c;letter-spacing:-0.068px;-webkit-text-stroke:.22px #222;">Quantity</div>
<div class="a" style="left:533.5px;top:470px;line-height:11px;height:11px;font-size:7.7px;color:#0c0c0c;letter-spacing:-0.340px;-webkit-text-stroke:.22px #222;">LocationName</div>
<div class="a" style="left:533.5px;top:481px;line-height:11px;height:11px;font-size:7.7px;color:#0c0c0c;letter-spacing:-0.158px;-webkit-text-stroke:.22px #222;">QuantityAvailable</div>
<div class="a" style="left:533.5px;top:493px;line-height:11px;height:11px;font-size:7.7px;color:#0c0c0c;letter-spacing:-0.505px;-webkit-text-stroke:.22px #222;">SellPrice</div>
<div class="a" style="left:533.5px;top:504px;line-height:11px;height:11px;font-size:7.7px;color:#0c0c0c;letter-spacing:-0.298px;-webkit-text-stroke:.22px #222;">OrderLineID</div>
<svg width="5" height="7" viewBox="0 0 5 7" style="left:524px;top:414px"><path d="M2.5 0.5C4 0.5 4.5 1.2 4.5 2C4.5 2.8 3.9 3.2 3.5 3.5L3.5 5.8L2.5 6.6L1.5 5.8L1.5 3.5C1.1 3.2 0.5 2.8 0.5 2C0.5 1.2 1 0.5 2.5 0.5Z" fill="#ecd98a" stroke="#54461a" stroke-width="1"/><rect x="2" y="1.3" width="1" height="1" fill="#fff6c8"/></svg>
<div class="tb" style="left:666px;top:441px;width:91px;height:91px"><div class="hl" style="top:15px"></div></div>
<div class="a" style="left:687.5px;top:458px;line-height:11px;height:11px;font-size:7.7px;color:#0c0c0c;letter-spacing:-0.519px;-webkit-text-stroke:.22px #222;">LocID</div>
<div class="a" style="left:687.5px;top:470px;line-height:11px;height:11px;font-size:7.7px;color:#0c0c0c;letter-spacing:-0.658px;-webkit-text-stroke:.22px #222;">LocName</div>
<svg width="5" height="7" viewBox="0 0 5 7" style="left:678px;top:459px"><path d="M2.5 0.5C4 0.5 4.5 1.2 4.5 2C4.5 2.8 3.9 3.2 3.5 3.5L3.5 5.8L2.5 6.6L1.5 5.8L1.5 3.5C1.1 3.2 0.5 2.8 0.5 2C0.5 1.2 1 0.5 2.5 0.5Z" fill="#ecd98a" stroke="#54461a" stroke-width="1"/><rect x="2" y="1.3" width="1" height="1" fill="#fff6c8"/></svg>
<div class="tb" style="left:168px;top:468px;width:125px;height:123px"><div class="hl" style="top:15px"></div></div>
<div class="a" style="left:189.5px;top:485px;line-height:11px;height:11px;font-size:7.7px;color:#0c0c0c;letter-spacing:-0.357px;-webkit-text-stroke:.22px #222;">ProdSupID</div>
<div class="a" style="left:189.5px;top:497px;line-height:11px;height:11px;font-size:7.7px;color:#0c0c0c;letter-spacing:-0.327px;-webkit-text-stroke:.22px #222;">SupplierName</div>
<div class="a" style="left:189.5px;top:508px;line-height:11px;height:11px;font-size:7.7px;color:#0c0c0c;letter-spacing:-0.268px;-webkit-text-stroke:.22px #222;">SupplierAddress</div>
<div class="a" style="left:189.5px;top:519px;line-height:11px;height:11px;font-size:7.7px;color:#0c0c0c;letter-spacing:-0.180px;-webkit-text-stroke:.22px #222;">SupplierContact</div>
<div class="a" style="left:189.5px;top:531px;line-height:11px;height:11px;font-size:7.7px;color:#0c0c0c;letter-spacing:-0.146px;-webkit-text-stroke:.22px #222;">SupplierTelephone</div>
<div class="a" style="left:189.5px;top:542px;line-height:11px;height:11px;font-size:7.7px;color:#0c0c0c;letter-spacing:-0.176px;-webkit-text-stroke:.22px #222;">SupplierWebsite</div>
<div class="a" style="left:189.5px;top:553px;line-height:11px;height:11px;font-size:7.7px;color:#0c0c0c;letter-spacing:-0.295px;-webkit-text-stroke:.22px #222;">SupplierEmail</div>
<svg width="5" height="7" viewBox="0 0 5 7" style="left:180px;top:486px"><path d="M2.5 0.5C4 0.5 4.5 1.2 4.5 2C4.5 2.8 3.9 3.2 3.5 3.5L3.5 5.8L2.5 6.6L1.5 5.8L1.5 3.5C1.1 3.2 0.5 2.8 0.5 2C0.5 1.2 1 0.5 2.5 0.5Z" fill="#ecd98a" stroke="#54461a" stroke-width="1"/><rect x="2" y="1.3" width="1" height="1" fill="#fff6c8"/></svg>
<div class="tb" style="left:359px;top:462px;width:91px;height:92px"><div class="hl" style="top:15px"></div></div>
<div class="a" style="left:380.5px;top:479px;line-height:11px;height:11px;font-size:7.7px;color:#0c0c0c;letter-spacing:-0.271px;-webkit-text-stroke:.22px #222;">SupplierID</div>
<div class="a" style="left:380.5px;top:491px;line-height:11px;height:11px;font-size:7.7px;color:#0c0c0c;letter-spacing:-0.243px;-webkit-text-stroke:.22px #222;">ProductID</div>
<svg width="5" height="7" viewBox="0 0 5 7" style="left:371px;top:480px"><path d="M2.5 0.5C4 0.5 4.5 1.2 4.5 2C4.5 2.8 3.9 3.2 3.5 3.5L3.5 5.8L2.5 6.6L1.5 5.8L1.5 3.5C1.1 3.2 0.5 2.8 0.5 2C0.5 1.2 1 0.5 2.5 0.5Z" fill="#ecd98a" stroke="#54461a" stroke-width="1"/><rect x="2" y="1.3" width="1" height="1" fill="#fff6c8"/></svg>
<div class="a" style="left:216.8px;top:149px;line-height:11px;height:11px;font-size:8px;color:#444;letter-spacing:-0.138px;-webkit-text-stroke:.12px #444;">Products</div>
<div class="a" style="left:212.5px;top:96px;line-height:11px;height:11px;font-size:8px;color:#444;letter-spacing:-0.142px;-webkit-text-stroke:.12px #444;">Products_1</div>
<div class="a" style="left:514.0px;top:96px;line-height:11px;height:11px;font-size:8px;color:#444;letter-spacing:-0.145px;-webkit-text-stroke:.12px #444;">ProductImages</div>
<div class="a" style="left:697.8px;top:159px;line-height:11px;height:11px;font-size:8px;color:#444;letter-spacing:-0.131px;-webkit-text-stroke:.12px #444;">OrderDetails</div>
<div class="a" style="left:377.8px;top:218px;line-height:11px;height:11px;font-size:8px;color:#444;letter-spacing:-0.150px;-webkit-text-stroke:.12px #444;">Customers</div>
<div class="a" style="left:572.7px;top:215px;line-height:11px;height:11px;font-size:8px;color:#444;letter-spacing:-0.143px;-webkit-text-stroke:.12px #444;">Orders</div>
<div class="a" style="left:557.0px;top:399px;line-height:11px;height:11px;font-size:8px;color:#444;letter-spacing:-0.133px;-webkit-text-stroke:.12px #444;">Locations</div>
<div class="a" style="left:691.8px;top:444px;line-height:11px;height:11px;font-size:8px;color:#444;letter-spacing:-0.140px;-webkit-text-stroke:.12px #444;">LocMasterLst</div>
<div class="a" style="left:206.5px;top:471px;line-height:11px;height:11px;font-size:8px;color:#444;letter-spacing:-0.133px;-webkit-text-stroke:.12px #444;">ProductSupplier</div>
<div class="a" style="left:384.0px;top:465px;line-height:11px;height:11px;font-size:8px;color:#444;letter-spacing:-0.125px;-webkit-text-stroke:.12px #444;">SuppliersIDtbl</div>
<svg width="800" height="607" viewBox="0 0 800 607"><path d="M155 109h1v3h1v1h-3v-1h1v-2h-1v-1z" fill="#000" shape-rendering="crispEdges"/><rect x="149" y="115" width="10" height="2" fill="#000" shape-rendering="crispEdges"/><line x1="152" y1="116.5" x2="163" y2="120.5" stroke="#111" stroke-width="1"/><line x1="211" y1="140.5" x2="225" y2="146.5" stroke="#111" stroke-width="1"/><path d="M304 162h1v3h1v1h-3v-1h1v-2h-1v-1z" fill="#000" shape-rendering="crispEdges"/><rect x="299" y="168" width="10" height="2" fill="#000" shape-rendering="crispEdges"/><ellipse cx="301" cy="175.5" rx="1.6" ry="1.1" fill="none" stroke="#000" stroke-width="1.25"/><ellipse cx="305" cy="175.5" rx="1.6" ry="1.1" fill="none" stroke="#000" stroke-width="1.25"/><rect x="299" y="179" width="9" height="2" fill="#000" shape-rendering="crispEdges"/><line x1="294" y1="174.5" x2="299" y2="176" stroke="#111" stroke-width="1"/><line x1="308" y1="168.7" x2="450" y2="127.2" stroke="#111" stroke-width="1"/><line x1="308" y1="169.5" x2="645.5" y2="201.6" stroke="#111" stroke-width="1"/><rect x="283.5" y="111.5" width="9" height="27" fill="#fff" stroke="#9a9a9a"/><path d="M283.5 120.5h9M283.5 129.5h9" stroke="#9a9a9a"/><path d="M285.8 117h4.6l-2.3-2.5z" fill="#555"/><path d="M285.8 133h4.6l-2.3 2.5z" fill="#555"/><ellipse cx="452" cy="122.5" rx="1.6" ry="1.1" fill="none" stroke="#000" stroke-width="1.25"/><ellipse cx="456" cy="122.5" rx="1.6" ry="1.1" fill="none" stroke="#000" stroke-width="1.25"/><rect x="450" y="126" width="10" height="2" fill="#000" shape-rendering="crispEdges"/><ellipse cx="649" cy="185.5" rx="1.6" ry="1.1" fill="none" stroke="#000" stroke-width="1.25"/><ellipse cx="653" cy="185.5" rx="1.6" ry="1.1" fill="none" stroke="#000" stroke-width="1.25"/><rect x="646" y="189" width="9" height="2" fill="#000" shape-rendering="crispEdges"/><ellipse cx="648" cy="197.0" rx="1.6" ry="1.6" fill="none" stroke="#000" stroke-width="1.25"/><ellipse cx="652" cy="197.0" rx="1.6" ry="1.6" fill="none" stroke="#000" stroke-width="1.25"/><rect x="645" y="201" width="10" height="2" fill="#000" shape-rendering="crispEdges"/><line x1="646.5" y1="191" x2="646.5" y2="201" stroke="#111" stroke-width="0.8"/><line x1="648" y1="203" x2="654.5" y2="234" stroke="#111" stroke-width="1"/><path d="M648 228h1v3h1v1h-3v-1h1v-2h-1v-1z" fill="#000" shape-rendering="crispEdges"/><rect x="645" y="234" width="10" height="2" fill="#000" shape-rendering="crispEdges"/><path d="M487 231h1v3h1v1h-3v-1h1v-2h-1v-1z" fill="#000" shape-rendering="crispEdges"/><rect x="482" y="237" width="10" height="2" fill="#000" shape-rendering="crispEdges"/><line x1="491" y1="238" x2="507" y2="246" stroke="#111" stroke-width="1"/><ellipse cx="509" cy="241.5" rx="1.6" ry="1.1" fill="none" stroke="#000" stroke-width="1.25"/><ellipse cx="513" cy="241.5" rx="1.6" ry="1.1" fill="none" stroke="#000" stroke-width="1.25"/><rect x="507" y="245" width="10" height="2" fill="#000" shape-rendering="crispEdges"/></svg>
</div></body></html>
